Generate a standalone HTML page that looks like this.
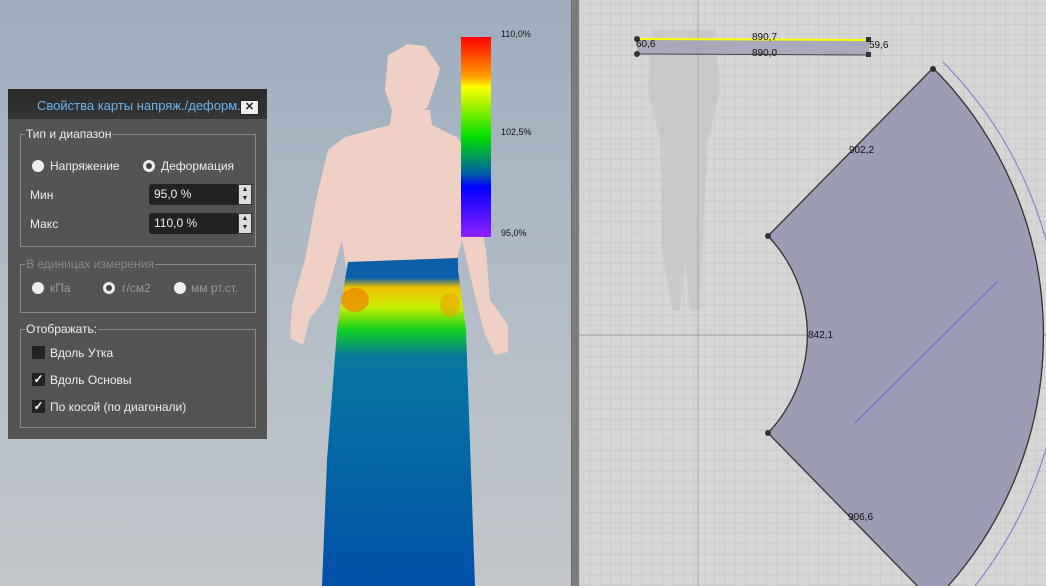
<!DOCTYPE html>
<html><head><meta charset="utf-8"><style>
*{margin:0;padding:0;box-sizing:border-box}
body{width:1046px;height:586px;overflow:hidden;position:relative;font-family:"Liberation Sans",sans-serif;background:#a9b6c3}
#vp{position:absolute;left:0;top:0;width:571px;height:586px;background:linear-gradient(#9dadbf,#b6bfc8 60%,#c2c6ca)}
#div{position:absolute;left:571px;top:0;width:8px;height:586px;background:#7d7d7d;border-left:1px solid #6a6a6a}
#pn{position:absolute;left:579px;top:0;width:467px;height:586px;background-color:#d6d6d6;
background-image:linear-gradient(#cacaca 1px,transparent 1px),linear-gradient(90deg,#cacaca 1px,transparent 1px);background-size:10.4px 10.4px;background-position:0 3px}
.dlg{position:absolute;left:8px;top:89px;width:259px;height:350px;background:#545454;color:#eee;font-size:12px}
.ttl{height:30px;background:linear-gradient(#2a2a2a,#353535);color:#6bb4ee;font-size:13px;line-height:34px;padding-left:29px}
.xb{position:absolute;left:232px;top:11px;width:19px;height:15px;background:#eee;border:1px solid #222;color:#222;font-size:11px;font-weight:bold;text-align:center;line-height:13px}
fieldset{position:absolute;left:12px;border:1px solid #8a8a8a;width:236px}
legend{margin-left:4px;padding:0 1px;font-size:12px}
.ab{position:absolute;white-space:nowrap}
.rd{position:absolute;width:12px;height:12px;border-radius:50%;background:#eee}
.rd.on::after{content:"";position:absolute;left:3px;top:3px;width:6px;height:6px;border-radius:50%;background:#444}
.cb{position:absolute;width:13px;height:13px;background:#222;color:#fff;font-size:12px;line-height:13px;text-align:center;font-weight:bold}
.in{position:absolute;left:141px;width:90px;height:21px;background:#222;border-radius:3px;line-height:21px;padding-left:5px}
.sp{position:absolute;left:230px;width:14px;height:21px;background:#ddd;border:1px solid #333;font-size:7px;color:#222;text-align:center;line-height:9px}
</style></head><body>
<div id="vp">
<svg width="571" height="586" style="position:absolute;left:0;top:0">
<defs>
<linearGradient id="cbar" x1="0" y1="0" x2="0" y2="1">
<stop offset="0" stop-color="#ff0000"/><stop offset=".2" stop-color="#ffa000"/><stop offset=".25" stop-color="#ffff00"/><stop offset=".5" stop-color="#00e000"/><stop offset=".68" stop-color="#0060a0"/><stop offset=".75" stop-color="#0000ff"/><stop offset="1" stop-color="#9020ff"/></linearGradient>
<linearGradient id="sk" x1="0" y1="0" x2="0" y2="1">
<stop offset="0" stop-color="#0a5fa8"/><stop offset=".06" stop-color="#0a5fa8"/><stop offset=".09" stop-color="#f0c000"/><stop offset=".15" stop-color="#c8f000"/><stop offset=".22" stop-color="#10d020"/><stop offset=".3" stop-color="#0878a0"/><stop offset="1" stop-color="#0050a8"/></linearGradient>
</defs>
<g fill="#f0d0c4">
<path d="M388,55 L408,44 L425,46 L440,68 L437,80 L427,108 L412,116 L392,110 L385,90 Z"/>
<path d="M392,110 L430,110 L432,125 L458,138 L470,160 L476,200 L486,250 L490,300 L508,325 L508,352 L495,355 L485,335 L476,300 L462,240 L456,262 L346,268 L342,240 L325,300 L310,318 L303,345 L290,338 L292,305 L305,260 L316,200 L328,150 L345,137 L390,125 Z"/>
</g>
<path d="M348,262 L458,258 L458,270 L466,330 L475,586 L322,586 L327,460 L337,330 L345,280 Z" fill="url(#sk)"/>
<ellipse cx="355" cy="300" rx="14" ry="12" fill="#f08000" opacity=".7"/>
<ellipse cx="450" cy="305" rx="10" ry="12" fill="#f0a000" opacity=".6"/>
<rect x="461" y="37" width="30" height="200" fill="url(#cbar)"/>
<g font-size="9" fill="#111"><text x="501" y="37">110,0%</text><text x="501" y="135">102,5%</text><text x="501" y="236">95,0%</text></g>
</svg>
</div>
<div id="div"></div>
<div id="pn"></div>
<svg width="1046" height="586" style="position:absolute;left:0;top:0">
<path d="M652,30 L648,90 L660,140 L662,250 L672,310 L680,310 L685,260 L690,310 L700,310 L702,250 L708,140 L720,90 L715,30 Z" fill="#c4c4c4" opacity=".7"/>
<line x1="579" y1="335" x2="1046" y2="335" stroke="#a0a0a0"/>
<line x1="698" y1="0" x2="698" y2="586" stroke="#a8a8a8"/>
<path d="M637,39 L869,40 L869,55 L637,54 Z" fill="#9f9fb5" opacity=".8"/>
<line x1="637" y1="39" x2="869" y2="40" stroke="#ffff00" stroke-width="2"/>
<line x1="637" y1="54" x2="869" y2="55" stroke="#444"/>
<g fill="#333"><circle cx="637" cy="39" r="3"/><circle cx="637" cy="54" r="3"/><rect x="866" y="37" width="5" height="5"/><rect x="866" y="52" width="5" height="5"/></g>
<path d="M933,68 A378,378 0 0 1 933,602 L768,433 A143,143 0 0 0 768,236 Z" fill="#9c9cb4" stroke="#333" stroke-width="1.3"/>
<path d="M943,62 A410,410 0 0 1 1060,380" fill="none" stroke="#7a7ad0"/>
<path d="M1060,380 A410,410 0 0 1 975,586" fill="none" stroke="#7a7ad0"/>
<line x1="855" y1="423" x2="997" y2="282" stroke="#6a6ad0"/>
<g fill="#333"><circle cx="933" cy="69" r="3"/><circle cx="768" cy="236" r="3"/><circle cx="768" cy="433" r="3"/></g>
<g font-size="10" fill="#111" font-family="Liberation Sans"><text x="752" y="40">890,7</text><text x="752" y="56">890,0</text><text x="636" y="47">60,6</text><text x="869" y="48">59,6</text><text x="849" y="153">902,2</text><text x="808" y="338">842,1</text><text x="848" y="520">906,6</text></g>
</svg>
<div class="dlg">
<div class="ttl">Свойства карты напряж./деформ.</div>
<div class="xb">✕</div>
<fieldset style="top:38px;height:120px"><legend>Тип и диапазон</legend></fieldset>
<div class="rd" style="left:24px;top:71px"></div><div class="ab" style="left:42px;top:70px">Напряжение</div>
<div class="rd on" style="left:135px;top:71px"></div><div class="ab" style="left:153px;top:70px">Деформация</div>
<div class="ab" style="left:22px;top:99px">Мин</div><div class="in" style="top:95px">95,0 %</div><div class="sp" style="top:95px">▲<br>▼</div>
<div class="ab" style="left:22px;top:128px">Макс</div><div class="in" style="top:124px">110,0 %</div><div class="sp" style="top:124px">▲<br>▼</div>
<fieldset style="top:168px;height:56px;color:#888"><legend>В единицах измерения</legend></fieldset>
<div class="rd" style="left:24px;top:193px"></div><div class="ab" style="left:42px;top:192px;color:#999">кПа</div>
<div class="rd on" style="left:95px;top:193px"></div><div class="ab" style="left:114px;top:192px;color:#999">г/см2</div>
<div class="rd" style="left:166px;top:193px"></div><div class="ab" style="left:183px;top:192px;color:#999">мм рт.ст.</div>
<fieldset style="top:233px;height:106px"><legend>Отображать:</legend></fieldset>
<div class="cb" style="left:24px;top:257px"></div><div class="ab" style="left:42px;top:257px">Вдоль Утка</div>
<div class="cb" style="left:24px;top:284px">✓</div><div class="ab" style="left:42px;top:284px">Вдоль Основы</div>
<div class="cb" style="left:24px;top:311px">✓</div><div class="ab" style="left:42px;top:311px">По косой (по диагонали)</div>
</div>
</body></html>
